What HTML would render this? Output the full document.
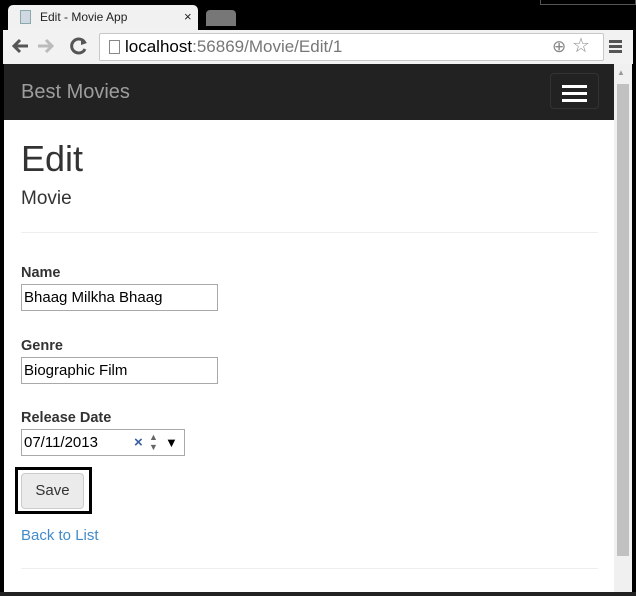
<!DOCTYPE html>
<html><head><style>
*{margin:0;padding:0;box-sizing:border-box}
body{width:636px;height:596px;background:#000;position:relative;overflow:hidden;font-family:"Liberation Sans",Arial,sans-serif}
.abs{position:absolute}
.tab{left:8px;top:5px;width:190px;height:26px;background:#f1f1f1;border-radius:5px 5px 0 0;font-size:12px;color:#222}
.chrome{left:3px;top:30px;width:630px;height:34px;background:#f2f2f2}
.url{left:99px;top:33px;width:505px;height:28px;background:#fff;border:1px solid #c8c8c8;border-radius:2px;font-size:17px;line-height:26px;padding-left:25px;color:#777}
.nav{left:4px;top:64px;width:610px;height:56px;background:#222}
.page{left:4px;top:120px;width:610px;height:472px;background:#fff}
.sb{left:614px;top:64px;width:18px;height:528px;background:#f0f0f0}
label{position:absolute;left:21px;font-weight:bold;font-size:14.5px;color:#333}
.inp{position:absolute;left:21px;width:197px;height:27px;border:1px solid #a9a9a9;font-size:15px;line-height:25px;padding-left:2px;color:#000;background:#fff}
</style></head><body>
<div class="abs tab"><div class="abs" style="left:12px;top:5px;width:11px;height:14px;background:#cfd8e3;border:1px solid #8aa"></div><span class="abs" style="left:32px;top:5px">Edit - Movie App</span><span class="abs" style="left:176px;top:4px;font-size:13px">×</span></div>
<div class="abs" style="left:206px;top:10px;width:30px;height:16px;background:#777;border-radius:4px 4px 0 0"></div>
<div class="abs" style="left:540px;top:0;width:96px;height:5px;border:1px solid #555;border-top:none"></div>
<div class="abs chrome"></div>
<svg class="abs" style="left:8px;top:34px" width="80" height="24" viewBox="0 0 80 24">
<path d="M20 12H6M12 6L6 12L12 18" stroke="#555" stroke-width="3" fill="none"/>
<path d="M30 12H44M38 6L44 12L38 18" stroke="#bbb" stroke-width="3" fill="none"/>
<path d="M77 9A7 7 0 1 0 77 15" stroke="#555" stroke-width="3" fill="none"/><path d="M73 4L79 9L73 11Z" fill="#555"/>
</svg>
<div class="abs url"><span style="color:#000">localhost</span>:56869/Movie/Edit/1<div class="abs" style="left:9px;top:6px;width:11px;height:14px;border:1px solid #888"></div><span class="abs" style="left:452px;top:0;color:#888">⊕</span><span class="abs" style="left:472px;top:-1px;color:#888;font-size:20px">☆</span></div>
<div class="abs" style="left:609px;top:40px;width:13px;height:3px;background:#555;box-shadow:0 5px #555,0 10px #555"></div>
<div class="abs nav"><span class="abs" style="left:17px;top:17px;font-size:20px;color:#9d9d9d">Best Movies</span>
<div class="abs" style="left:546px;top:9px;width:49px;height:36px;border:1px solid #333;border-radius:4px"><div class="abs" style="left:11px;top:11px;width:25px;height:3px;background:#fff;box-shadow:0 7px #fff,0 14px #fff"></div></div></div>
<div class="abs page"></div>
<div class="abs sb"><div class="abs" style="left:3px;top:4px;font-size:8px;color:#999">▲</div><div class="abs" style="left:3px;top:20px;width:12px;height:472px;background:#c1c1c1"></div></div>
<div class="abs" style="left:21px;top:138px;font-size:36px;color:#333">Edit</div>
<div class="abs" style="left:21px;top:188px;font-size:19px;color:#333">Movie</div>
<div class="abs" style="left:21px;top:232px;width:577px;height:1px;background:#eee"></div>
<label style="top:265px">Name</label>
<div class="inp" style="top:284px">Bhaag Milkha Bhaag</div>
<label style="top:338px">Genre</label>
<div class="inp" style="top:357px">Biographic Film</div>
<label style="top:410px">Release Date</label>
<div class="inp" style="top:429px;width:164px">07/11/2013<span class="abs" style="left:112px;top:0;color:#3a5da0;font-weight:bold">×</span><span class="abs" style="left:127px;top:2px;font-size:9px;line-height:10px;color:#666">▲<br>▼</span><span class="abs" style="left:143px;top:0;font-size:13px">▼</span></div>
<div class="abs" style="left:15px;top:467px;width:77px;height:47px;border:3px solid #000"></div>
<div class="abs" style="left:21px;top:473px;width:63px;height:36px;background:#ebebeb;border:1px solid #ccc;border-radius:4px;font-size:15px;color:#333;text-align:center;line-height:34px">Save</div>
<div class="abs" style="left:21px;top:527px;font-size:15px;color:#428bca">Back to List</div>
<div class="abs" style="left:21px;top:568px;width:577px;height:1px;background:#eee"></div>
<div class="abs" style="left:0;top:592px;width:636px;height:4px;background:#222"></div>
</body></html>
